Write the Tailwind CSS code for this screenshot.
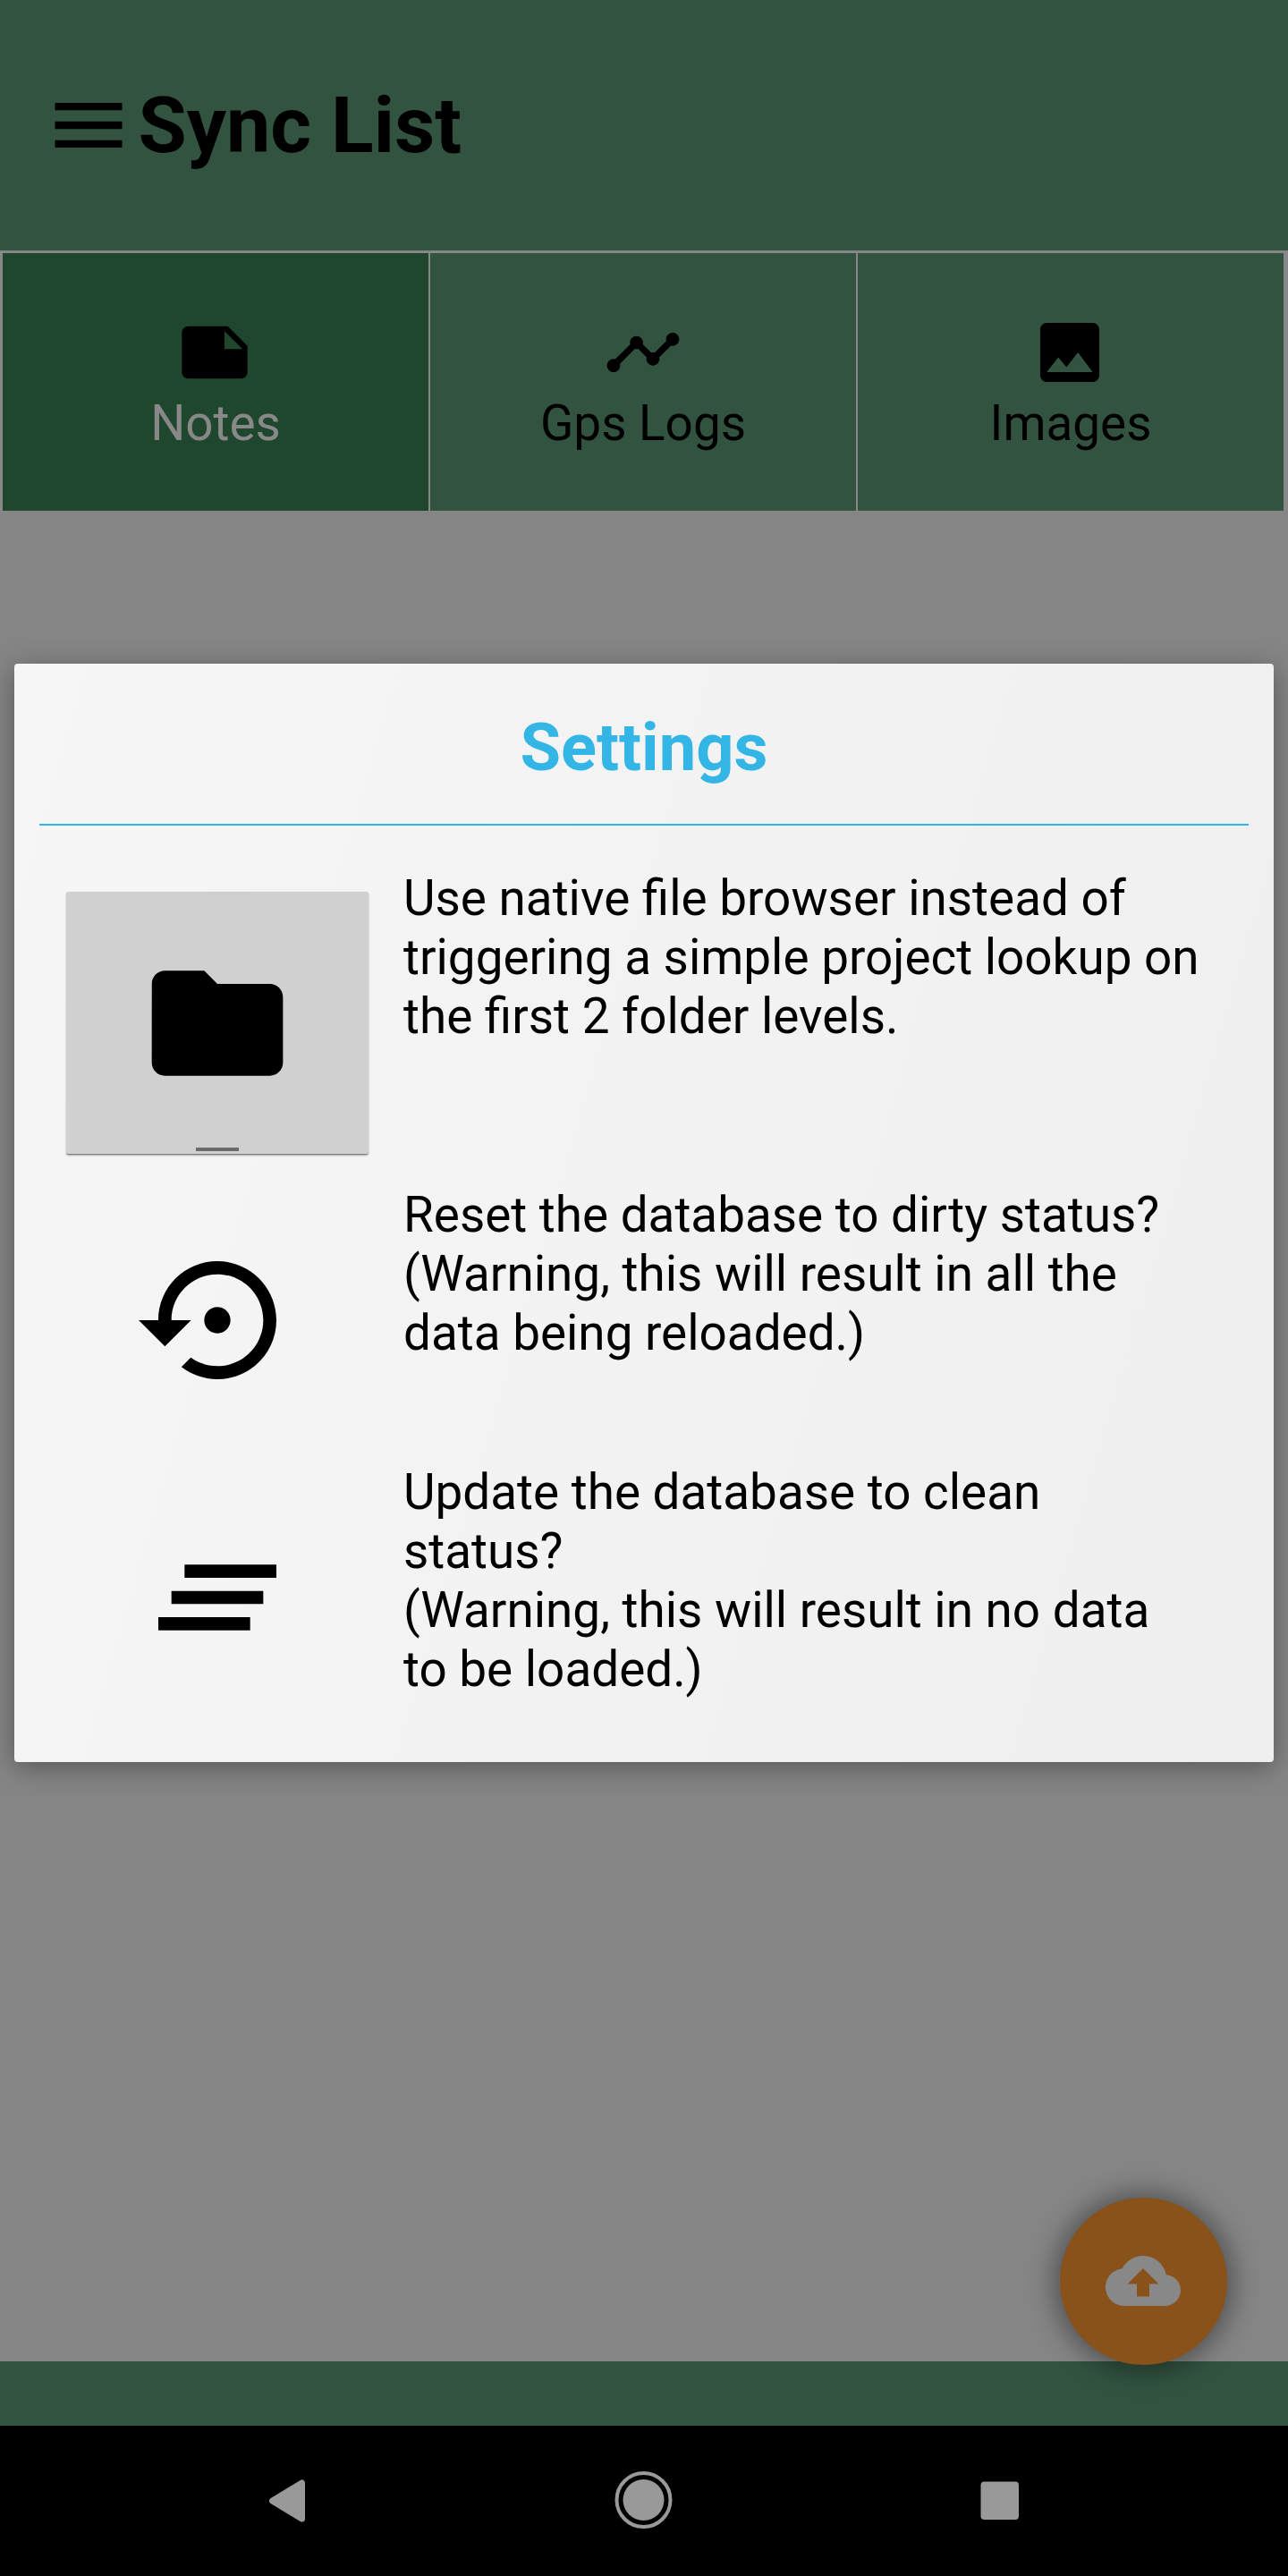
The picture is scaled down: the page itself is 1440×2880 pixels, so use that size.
<!DOCTYPE html>
<html lang="en">
<head>
<meta charset="utf-8">
<title>Sync List</title>
<script src="https://cdn.jsdelivr.net/npm/@tailwindcss/browser@4"></script>
</head>
<body class="bg-black">
<div class="relative flex h-[2880px] w-[1440px] flex-col overflow-hidden bg-[#858585] font-['Roboto',sans-serif] text-[54.85px] leading-[66px] text-black">

  <header class="flex h-[280px] items-center bg-[#325340] pl-[49px]">
    <svg class="size-[100px]" viewBox="0 0 24 24"><path d="M3 18h18v-2H3v2zm0-5h18v-2H3v2zm0-7v2h18V6H3z"/></svg>
    <h1 class="pl-[5.5px] text-[88px] leading-[104px] font-bold">Sync List</h1>
  </header>

  <nav class="grid h-[291px] grid-cols-3 gap-[2px] bg-[#878787] pt-[3px] pr-[5px] pl-[3px] text-center">
    <div class="flex flex-col items-center bg-[#1f472d] pt-[67px] text-[#888888]">
      <svg class="mr-[2px] size-[88px]" viewBox="0 0 24 24" fill="#000"><path d="M22 10l-6-6H4c-1.1 0-2 .9-2 2v12.01c0 1.1.9 1.99 2 1.99l16-.01c1.1 0 2-.89 2-1.99v-8zm-7-4.5l5.5 5.5H15V5.5z"/></svg>
      <span class="pt-[2px]">Notes</span>
    </div>
    <div class="flex flex-col items-center bg-[#325340] pt-[67px]">
      <svg class="size-[88px]" viewBox="0 0 24 24"><path d="M23 8c0 1.1-.9 2-2 2-.18 0-.35-.02-.51-.07l-3.56 3.55c.05.16.07.34.07.52 0 1.1-.9 2-2 2s-2-.9-2-2c0-.18.02-.36.07-.52l-2.55-2.55c-.16.05-.34.07-.52.07s-.36-.02-.52-.07l-4.55 4.56c.05.16.07.33.07.51 0 1.1-.9 2-2 2s-2-.9-2-2 .9-2 2-2c.18 0 .35.02.51.07l4.56-4.55C8.02 9.36 8 9.18 8 9c0-1.1.9-2 2-2s2 .9 2 2c0 .18-.02.36-.07.52l2.55 2.55c.16-.05.34-.07.52-.07s.36.02.52.07l3.55-3.56C19.02 8.35 19 8.18 19 8c0-1.1.9-2 2-2s2 .9 2 2z"/></svg>
      <span class="pt-[2px]">Gps Logs</span>
    </div>
    <div class="flex flex-col items-center bg-[#325340] pt-[67px]">
      <svg class="mr-[2px] size-[88px]" viewBox="0 0 24 24"><path d="M21 19V5c0-1.1-.9-2-2-2H5c-1.1 0-2 .9-2 2v14c0 1.1.9 2 2 2h14c1.1 0 2-.9 2-2zM8.5 13.5l2.5 3.01L14.5 12l4.5 6H5l3.5-4.5z"/></svg>
      <span class="pt-[2px]">Images</span>
    </div>
  </nav>

  <main class="flex-1 px-4 pt-[171px]">
    <section class="h-[1228px] rounded-[4px] bg-linear-[106deg,#f6f6f6,#efefef] px-7 shadow-[0_6px_30px_rgba(0,0,0,0.35)]">
      <h2 class="flex h-[181px] items-center justify-center border-b-2 border-[#33b5e5] pt-[9px] text-[74px] leading-[88px] font-bold text-[#33b5e5]">Settings</h2>
      <div class="grid grid-cols-[338px_1fr] gap-x-[39px] pt-12 pl-[30px]">
        <div class="h-[354px] pt-[26px]">
          <div class="relative flex h-[294px] items-center justify-center rounded-[3px] border-b border-[#808080] bg-[#d0d0d0] shadow-[0_1px_2px_rgba(0,0,0,0.3)]">
            <svg class="size-[176px]" viewBox="0 0 24 24"><path d="M10 4H4c-1.1 0-1.99.9-1.99 2L2 18c0 1.1.9 2 2 2h16c1.1 0 2-.9 2-2V8c0-1.1-.9-2-2-2h-8l-2-2z"/></svg>
            <span class="absolute bottom-[3px] left-[145px] h-1 w-12 bg-[#6b6b6b]"></span>
          </div>
        </div>
        <p>Use native file browser instead of<br>triggering a simple project lookup on<br>the first 2 folder levels.</p>
        <div class="flex h-[310px] justify-center pt-[63px]">
          <svg class="size-[176px]" viewBox="0 0 24 24"><path d="M14 12c0-1.1-.9-2-2-2s-2 .9-2 2 .9 2 2 2 2-.9 2-2zm-2-9c-4.97 0-9 4.03-9 9H0l4 4 4-4H5c0-3.87 3.13-7 7-7s7 3.13 7 7-3.13 7-7 7c-1.51 0-2.91-.49-4.06-1.3l-1.42 1.44C8.04 20.3 9.94 21 12 21c4.97 0 9-4.03 9-9s-4.03-9-9-9z"/></svg>
        </div>
        <p>Reset the database to dirty status?<br>(Warning, this will result in all the<br>data being reloaded.)</p>
        <div class="flex justify-center pt-[63px]">
          <svg class="size-[176px]" viewBox="0 0 24 24"><path d="M5 13h14v-2H5v2zm-2 4h14v-2H3v2zM7 7v2h14V7H7z"/></svg>
        </div>
        <p>Update the database to clean<br>status?<br>(Warning, this will result in no data<br>to be loaded.)</p>
      </div>
    </section>
  </main>

  <div class="h-[72px] bg-[#325340]"></div>

  <footer class="flex h-[168px] items-center bg-black">
    <svg class="h-[168px] w-full" viewBox="0 0 1440 168" fill="#999">
      <path d="M304.5 84 337.5 64V104z" stroke="#999" stroke-width="7" stroke-linejoin="round"/>
      <circle cx="719.5" cy="83" r="23"/>
      <circle cx="719.5" cy="83" r="30" fill="none" stroke="#999" stroke-width="4"/>
      <rect x="1096.5" y="62.5" width="42.5" height="42.5" rx="4"/>
    </svg>
  </footer>

  <!-- floating upload button -->
  <div class="absolute top-[2457px] left-[1185px] flex size-[187px] items-center justify-center rounded-full bg-[#88521a] shadow-[0_1px_26px_9px_rgba(0,0,0,0.34)]">
    <svg class="mr-px mb-px size-[84px]" viewBox="0 0 24 24" fill="#888"><path d="M19.35 10.04C18.67 6.59 15.64 4 12 4 9.11 4 6.6 5.64 5.35 8.04 2.34 8.36 0 10.91 0 14c0 3.31 2.69 6 6 6h13c2.76 0 5-2.24 5-5 0-2.64-2.05-4.78-4.65-4.96zM14 13v4h-4v-4H7l5-5 5 5h-3z"/></svg>
  </div>
</div>
</body>
</html>
